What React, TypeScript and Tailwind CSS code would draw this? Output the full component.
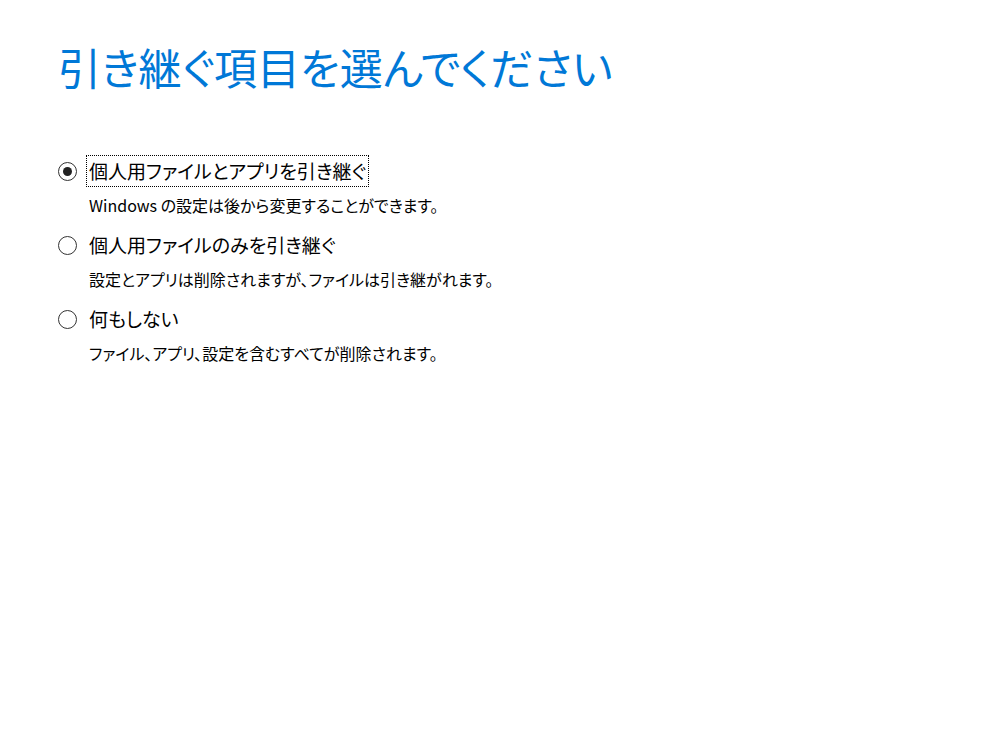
import React from "react";

const options = [
  { label: "個人用ファイルとアプリを引き継ぐ", desc: "Windows の設定は後から変更することができます。", selected: true },
  { label: "個人用ファイルのみを引き継ぐ", desc: "設定とアプリは削除されますが、ファイルは引き継がれます。", selected: false },
  { label: "何もしない", desc: "ファイル、アプリ、設定を含むすべてが削除されます。", selected: false },
];

export default function App() {
  return (
    <div
      className="w-[1000px] h-[737px] bg-white pl-[58px] pt-[36px] [font-feature-settings:'palt']"
      style={{ fontFamily: '"Noto Sans CJK JP", "Noto Sans", sans-serif' }}
    >
      <h1 className="text-[43px] leading-[60px] text-[#0078d7] font-normal">引き継ぐ項目を選んでください</h1>
      <div className="mt-[60px] flex flex-col gap-[11px]">
        {options.map((o) => (
          <div key={o.label} className="flex flex-col">
            <div className="flex items-center h-[30px]">
              <span className="w-[19px] h-[19px] rounded-full border border-[#333] flex items-center justify-center shrink-0">
                {o.selected && <span className="w-[9px] h-[9px] rounded-full bg-[#222]" />}
              </span>
              <span
                className={
                  "ml-[10px] px-[2px] h-[30px] flex items-center text-[19px] text-black " +
                  (o.selected ? "outline outline-1 outline-dotted outline-black" : "")
                }
              >
                {o.label}
              </span>
            </div>
            <div className="ml-[31px] mt-[5px] text-[16px] leading-[28px] text-black">{o.desc}</div>
          </div>
        ))}
      </div>
    </div>
  );
}
